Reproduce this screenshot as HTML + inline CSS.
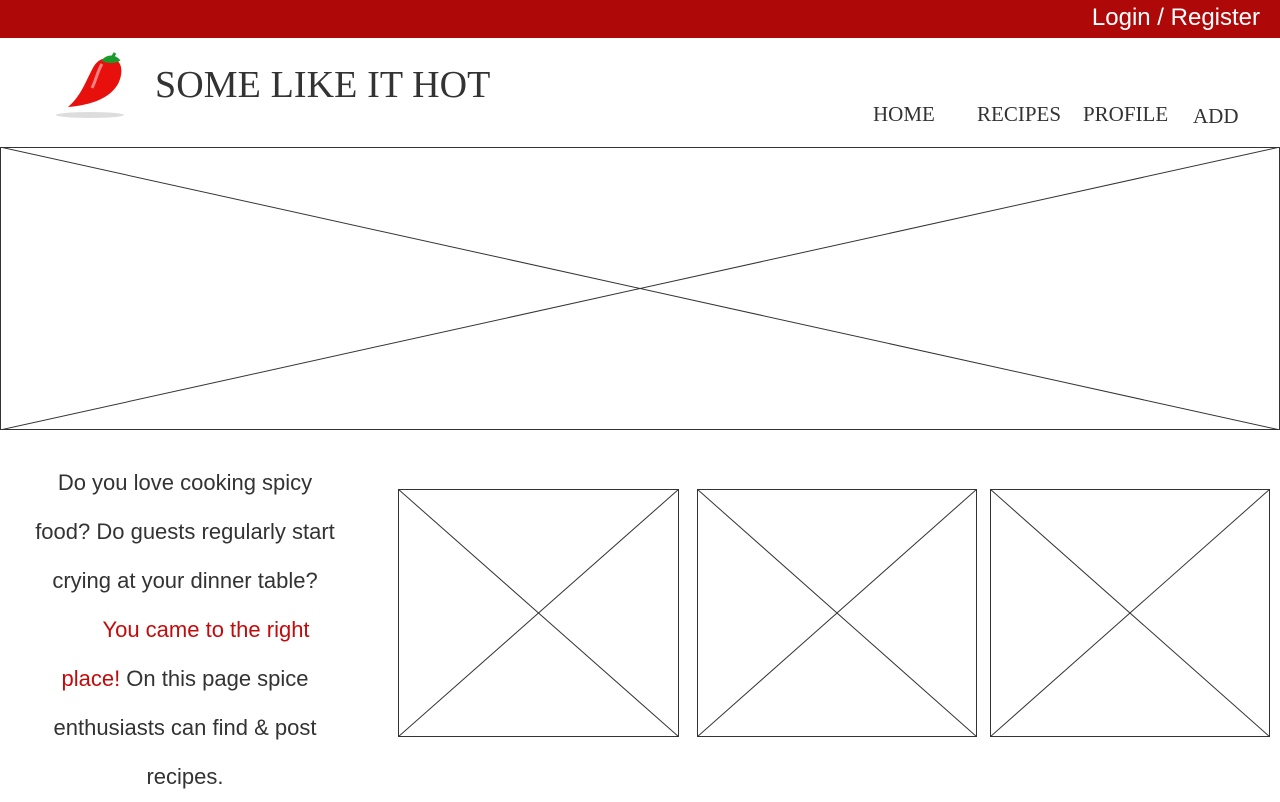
<!DOCTYPE html>
<html><head><meta charset="utf-8"><style>
body{margin:0;width:1280px;height:802px;overflow:hidden;background:#fff;position:relative;font-family:"Liberation Sans",sans-serif}
.top{position:absolute;left:0;top:0;width:1280px;height:38px;background:#af0808}
.login{position:absolute;right:20px;top:4px;color:#fff;font-size:24px}
.title{position:absolute;left:155px;top:63px;font-family:"Liberation Serif",serif;font-size:38px;color:#333;white-space:nowrap;letter-spacing:0.1px}
.nav{position:absolute;top:102px;font-family:"Liberation Serif",serif;font-size:21px;color:#333;white-space:nowrap}
.ln{position:absolute;left:0;width:370px;text-align:center;font-size:22px;color:#333;height:30px;line-height:30px;white-space:nowrap}
.r{color:#c40b0b}
svg.box{position:absolute}
</style></head><body>
<div class="top"><div class="login">Login / Register</div></div>
<svg style="position:absolute;left:52px;top:50px" width="80" height="72" viewBox="0 0 80 72">
<ellipse cx="38" cy="65" rx="34" ry="3" fill="#ddd"/>
<path d="M60 8 C70 10 72 22 66 34 C58 48 40 55 16 57 C30 45 34 30 42 16 C46 10 52 7 60 8Z" fill="#e8100c"/>
<path d="M50 14 C46 20 44 30 40 38" stroke="#ff8080" stroke-width="3" fill="none"/>
<path d="M52 10 C56 6 62 6 66 10 C62 12 56 12 52 10Z M60 8 L63 3" stroke="#1a9a2a" stroke-width="3" fill="#1a9a2a"/>
</svg>
<div class="title">SOME LIKE IT HOT</div>
<div class="nav" style="left:873px">HOME</div>
<div class="nav" style="left:977px">RECIPES</div>
<div class="nav" style="left:1083px">PROFILE</div>
<div class="nav" style="left:1193px;top:104px">ADD</div>
<svg class="box" style="left:0;top:147px" width="1280" height="283"><rect x="0.5" y="0.5" width="1279" height="282" fill="none" stroke="#333"/><line x1="0" y1="0" x2="1280" y2="283" stroke="#333"/><line x1="1280" y1="0" x2="0" y2="283" stroke="#333"/></svg>
<svg class="box" style="left:398px;top:489px" width="281" height="248"><rect x="0.5" y="0.5" width="280" height="247" fill="none" stroke="#333"/><line x1="0" y1="0" x2="281" y2="248" stroke="#333"/><line x1="281" y1="0" x2="0" y2="248" stroke="#333"/></svg>
<svg class="box" style="left:697px;top:489px" width="280" height="248"><rect x="0.5" y="0.5" width="279" height="247" fill="none" stroke="#333"/><line x1="0" y1="0" x2="280" y2="248" stroke="#333"/><line x1="280" y1="0" x2="0" y2="248" stroke="#333"/></svg>
<svg class="box" style="left:990px;top:489px" width="280" height="248"><rect x="0.5" y="0.5" width="279" height="247" fill="none" stroke="#333"/><line x1="0" y1="0" x2="280" y2="248" stroke="#333"/><line x1="280" y1="0" x2="0" y2="248" stroke="#333"/></svg>
<div class="ln" style="top:468px">Do you love cooking spicy</div>
<div class="ln" style="top:517px">food? Do guests regularly start</div>
<div class="ln" style="top:566px">crying at your dinner table?</div>
<div class="ln r" style="top:615px;left:21px">You came to the right</div>
<div class="ln" style="top:664px"><span class="r">place!</span> On this page spice</div>
<div class="ln" style="top:713px">enthusiasts can find &amp; post</div>
<div class="ln" style="top:762px">recipes.</div>
</body></html>
